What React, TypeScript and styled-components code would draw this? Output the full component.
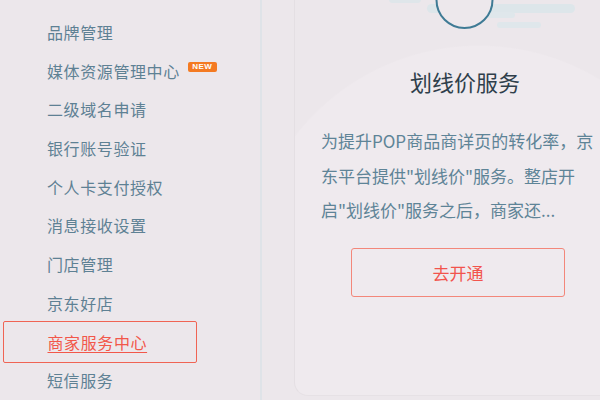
import React from "react";
import styled, { createGlobalStyle } from "styled-components";

const GlobalStyle = createGlobalStyle`
  html, body {
    margin: 0;
    padding: 0;
    width: 600px;
    height: 400px;
    overflow: hidden;
    background: #ece7eb;
  }
  body {
    font-family: "Noto Sans CJK SC", "Noto Sans", sans-serif;
  }
`;

const Page = styled.div`
  display: flex;
  width: 600px;
  height: 400px;
  overflow: hidden;
  background: #ece7eb;
`;

const Sidebar = styled.div`
  flex: 0 0 262px;
  height: 400px;
  border-right: 2px solid #dfe3e8;
  box-sizing: border-box;
  overflow: hidden;
`;

const MenuList = styled.ul`
  list-style: none;
  margin: -30.7px 0 0;
  padding: 0;
`;

const MenuItem = styled.li<{ $active?: boolean }>`
  display: flex;
  align-items: center;
  box-sizing: border-box;
  height: ${(p) => (p.$active ? "42px" : "38.7px")};
  margin: ${(p) => (p.$active ? "-1.65px 0 -1.65px 3px" : "0")};
  width: ${(p) => (p.$active ? "194px" : "auto")};
  padding-left: ${(p) => (p.$active ? "43.5px" : "47px")};
  border: ${(p) => (p.$active ? "1.5px solid #f06454" : "none")};
  border-radius: 2px;
  font-size: 16px;
  letter-spacing: 0.6px;
  color: ${(p) => (p.$active ? "#f2574a" : "#5e8194")};
  text-decoration: ${(p) => (p.$active ? "underline" : "none")};
  text-underline-offset: 3px;
  white-space: nowrap;

  &:first-child {
    height: 43.4px;
  }
`;

const NewBadge = styled.span`
  display: inline-flex;
  align-items: center;
  justify-content: center;
  width: 29px;
  height: 10px;
  margin-left: 8px;
  margin-top: -8px;
  border-radius: 2px;
  background: #f47a22;
  color: #fff;
  font-family: "Liberation Sans", Arial, sans-serif;
  font-size: 8px;
  font-weight: 700;
  letter-spacing: 0.5px;
`;

const Card = styled.div`
  flex: 0 0 340px;
  margin-left: 32px;
  height: 396px;
  box-sizing: border-box;
  border-left: 1px solid #e4dfe3;
  border-bottom: 1px solid #e6e1e5;
  border-bottom-left-radius: 14px;
  background: radial-gradient(circle 233px at 184px 278px, #efeaee 99.4%, transparent 100%);
  display: flex;
  flex-direction: column;
  align-items: center;
`;

const Illustration = styled.svg`
  display: block;
  width: 340px;
  height: 40px;
  flex: 0 0 auto;
`;

const Title = styled.h2`
  margin: 26px 0 0;
  font-size: 22px;
  line-height: 30px;
  font-weight: 400;
  color: #2f3f4b;
`;

const Description = styled.p`
  margin: 28px 0 0;
  align-self: flex-start;
  padding-left: 26px;
  width: 276px;
  font-size: 17px;
  line-height: 34.5px;
  color: #5e8497;
`;

const OpenButton = styled.button`
  align-self: flex-start;
  margin: 20px 0 0 56px;
  width: 214px;
  height: 49px;
  box-sizing: border-box;
  border: 1.5px solid #f3877a;
  border-radius: 3px;
  background: transparent;
  color: #f2544d;
  font-family: "Noto Sans CJK SC", sans-serif;
  font-size: 17px;
  cursor: pointer;
`;

const menu = [
  "店铺信息",
  "品牌管理",
  "媒体资源管理中心",
  "二级域名申请",
  "银行账号验证",
  "个人卡支付授权",
  "消息接收设置",
  "门店管理",
  "京东好店",
  "商家服务中心",
  "短信服务",
];

export default function App() {
  return (
    <Page>
      <GlobalStyle />
      <Sidebar>
        <MenuList>
          {menu.map((item) => (
            <MenuItem key={item} $active={item === "商家服务中心"}>
              {item}
              {item === "媒体资源管理中心" && <NewBadge>NEW</NewBadge>}
            </MenuItem>
          ))}
        </MenuList>
      </Sidebar>
      <Card>
        <Illustration viewBox="0 0 340 40">
          <rect x="94" y="-4" width="32" height="7" rx="3.5" fill="#dfe6ea" />
          <rect x="132" y="4" width="148" height="9" rx="4.5" fill="#dde6ea" />
          <rect x="202" y="22" width="44" height="6" rx="3" fill="#dfe7eb" />
          <rect x="180" y="12" width="40" height="6" rx="3" fill="#dfe7eb" />
          <circle cx="169.5" cy="0" r="28" fill="#ede8ec" stroke="#3f7b95" strokeWidth="2" />
        </Illustration>
        <Title>划线价服务</Title>
        <Description>
          为提升POP商品商详页的转化率，京东平台提供"划线价"服务。整店开启"划线价"服务之后，商家还...
        </Description>
        <OpenButton>去开通</OpenButton>
      </Card>
    </Page>
  );
}
